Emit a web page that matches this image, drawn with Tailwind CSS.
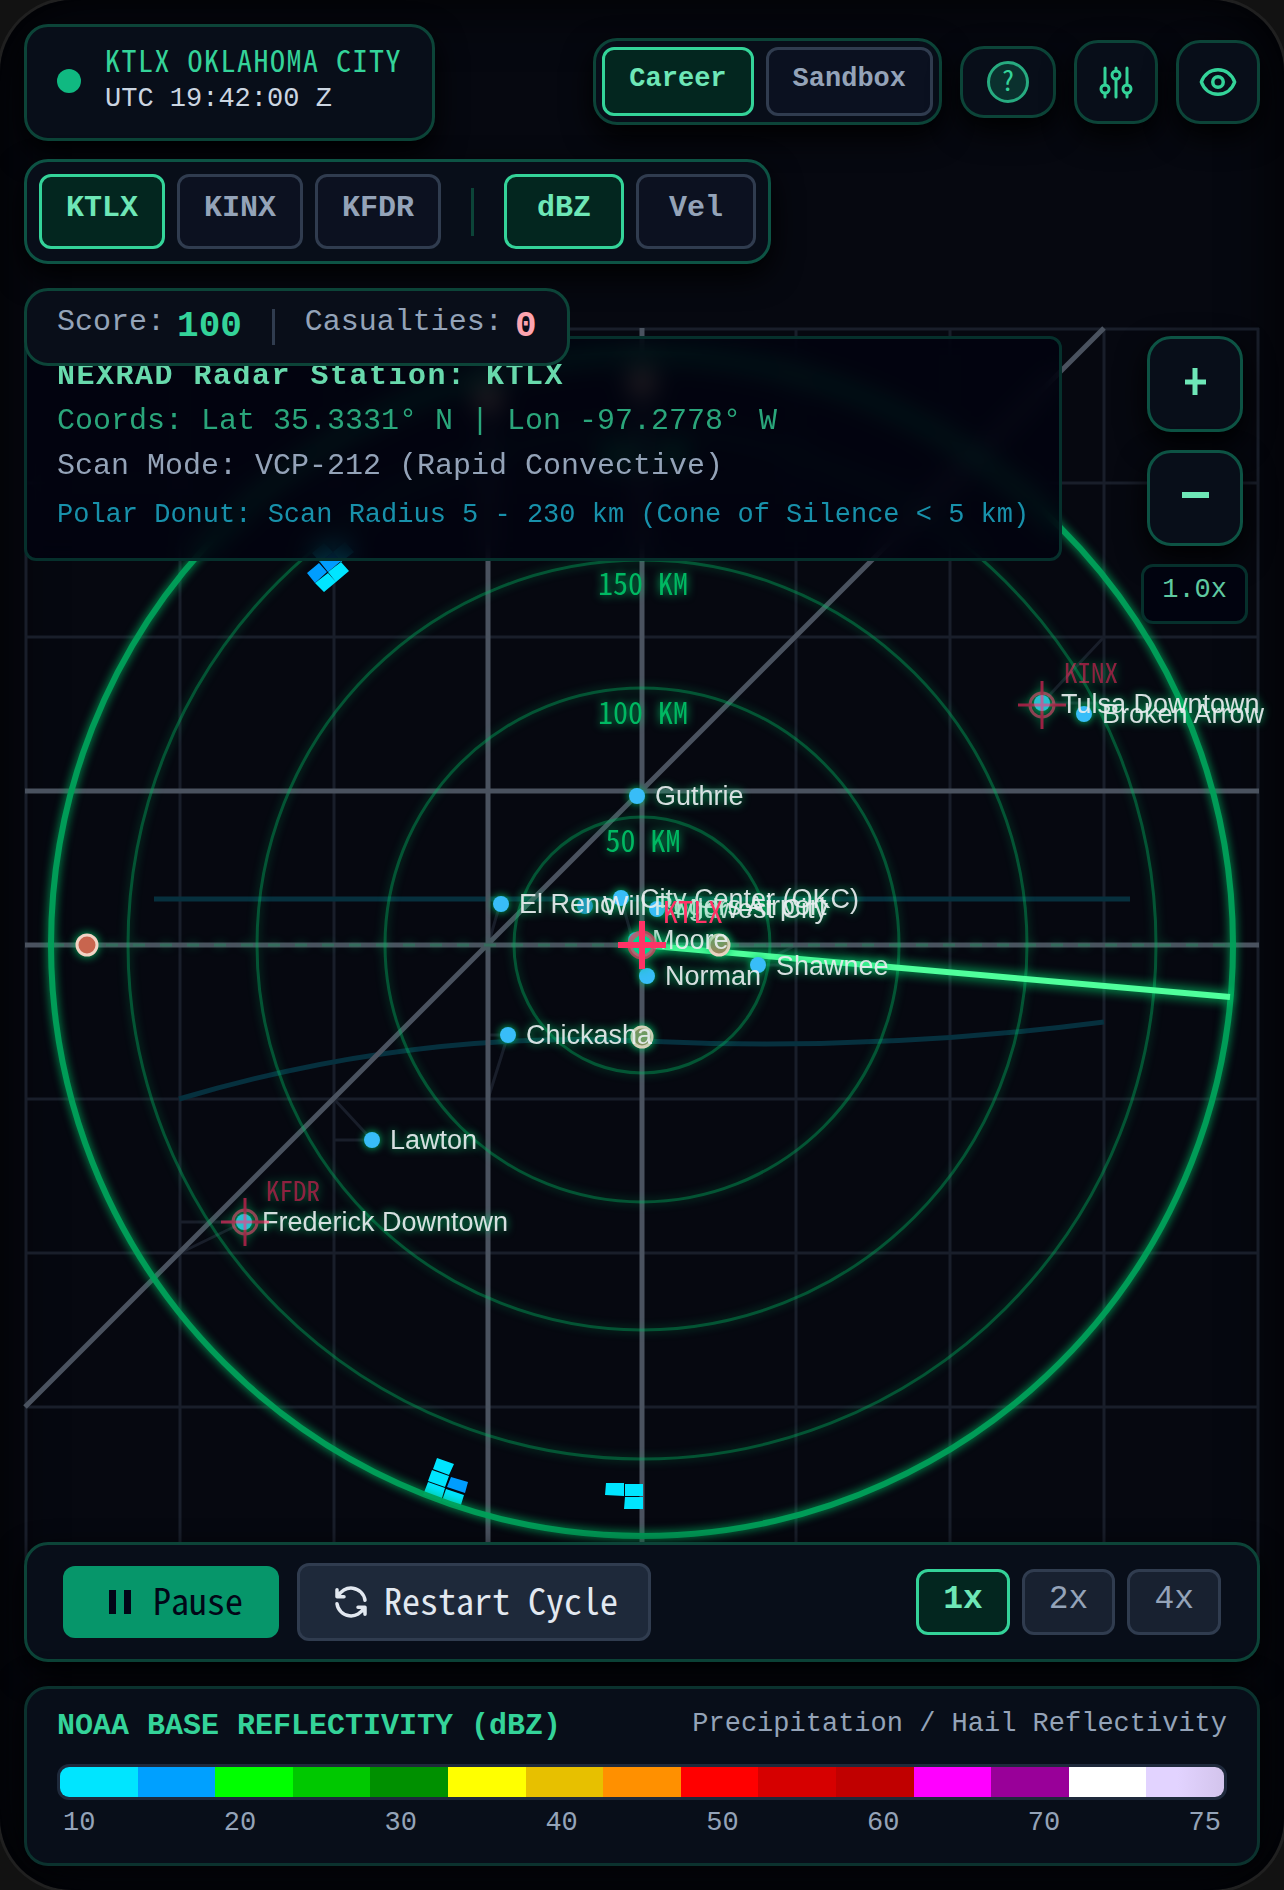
<!DOCTYPE html>
<html lang="en">
<head>
<meta charset="utf-8">
<meta name="viewport" content="width=device-width, initial-scale=1">
<title>NEXRAD Radar Console</title>
<script src="https://cdn.jsdelivr.net/npm/@tailwindcss/browser@4"></script>
</head>
<body class="bg-[#121212] font-['Liberation_Mono',monospace]">
<div class="grid min-h-screen grid-cols-1 overflow-hidden rounded-[72px] bg-[#060810] shadow-[0_0_0_3px_#202020,inset_0_0_60px_#000]">

  <!-- Radar map -->
  <svg class="col-start-1 row-start-1 w-full self-center overflow-visible px-[25px]" viewBox="25 328 1234 1234" fill="none" role="img" aria-label="Radar map">
    <g stroke="#191e2a" stroke-width="3">
      <path d="M26 328V1562M180 328V1562M334 328V1562M796 328V1562M950 328V1562M1104 328V1562M1258 328V1562"/>
      <path d="M25 329H1259M25 483H1259M25 637H1259M25 1099H1259M25 1253H1259M25 1407H1259M25 1561H1259"/>
    </g>
    <g stroke="#191e2a" stroke-width="3">
      <path d="M1104 637L1042 703H1104M334 1099L372 1140H334M180 1253L244 1222H180M488 1099L508 1035H488M488 945L500 904M634 945L621 898M796 945L757 965H796"/>
    </g>
    <g stroke="#06303e" stroke-width="5">
      <path d="M154 899H1130"/>
      <path d="M179 1099Q411 1030 642 1041T1104 1022"/>
    </g>
    <g stroke="#4a525f" stroke-width="5">
      <path d="M488 328V1562M642 328V1562M25 791H1259M25 945H1259M25 1407L1104 328"/>
    </g>
    <!-- Echoes -->
    <g fill="#00e5ff">
      <path d="M333 552L345 542L354 552L341 562ZM312 553L324 543L333 552L320 562Z"/>
      <path d="M328 572L341 562L349 571L336 582ZM315 583L328 573L336 582L324 592Z"/>
      <path d="M437 1458L454 1464L449 1475L433 1469ZM432 1470L449 1476L445 1487L428 1481ZM428 1482L445 1488L441 1501L423 1495ZM446 1489L464 1495L460 1508L442 1501Z"/>
      <path d="M606 1483H624V1496L605 1495ZM625 1484H643V1496H625ZM625 1497H643V1509H624Z"/>
      <g fill="#009dff">
        <path d="M307 573L319 563L327 572L315 583ZM320 562L333 552L341 561L328 572ZM451 1477L468 1482L465 1493L447 1487Z"/>
      </g>
    </g>
    <!-- Range rings -->
    <g class="[filter:drop-shadow(0_0_5px_#00b862)]">
      <g stroke="#00b060" stroke-opacity=".4" stroke-width="3">
        <circle cx="642" cy="945" r="128"/><circle cx="642" cy="945" r="257"/><circle cx="642" cy="945" r="385"/><circle cx="642" cy="945" r="514"/>
      </g>
      <path d="M52 945H1232" stroke="#1d8a5c" stroke-opacity=".4" stroke-width="3" stroke-dasharray="12 15"/>
      <circle cx="642" cy="945" r="591" stroke="#00a05a" stroke-opacity=".95" stroke-width="6"/>
      <g class="font-['Noto_Sans_Mono_CJK_SC','Noto_Sans_Mono_CJK_JP',monospace]" fill="#00b862" font-size="30" text-anchor="middle">
        <text x="642" y="467">200 KM</text><text x="643" y="595">150 KM</text><text x="643" y="724">100 KM</text><text x="643" y="852">50 KM</text>
      </g>
    </g>
    <path class="[filter:drop-shadow(0_0_6px_#00ff80)]" d="M642 945L1230 997" stroke="#50ff9c" stroke-width="6"/>
    <!-- Storm reports -->
    <g class="[filter:drop-shadow(0_0_5px_#00c86a)]" stroke="#f3d3c5" stroke-width="3">
      <circle cx="87" cy="945" r="10" fill="#c8654e"/><circle cx="719" cy="945" r="10" fill="#a4855f"/><circle cx="642" cy="1037" r="10" fill="#a4855f"/><circle cx="642" cy="382" r="10" fill="#c8654e"/><circle cx="488" cy="398" r="10" fill="#c8654e"/>
    </g>
    <!-- Cities -->
    <g class="font-['Liberation_Sans',sans-serif] [filter:drop-shadow(0_0_4px_#00c86a)]" font-size="27" fill="#38bdf8">
      <circle cx="585" cy="906" r="8" fill="#1f9cb8"/><circle cx="621" cy="898" r="8"/><circle cx="636" cy="940" r="8"/>
      <circle cx="637" cy="796" r="8"/><circle cx="501" cy="904" r="8"/><circle cx="657" cy="909" r="8"/>
      <circle cx="647" cy="976" r="8"/><circle cx="758" cy="965" r="8"/><circle cx="508" cy="1035" r="8"/>
      <circle cx="372" cy="1140" r="8"/><circle cx="244" cy="1222" r="8"/><circle cx="1042" cy="703" r="8"/><circle cx="1084" cy="714" r="8"/>
      <g fill="#e8eef0" fill-opacity=".92">
        <text x="640" y="908">City Center (OKC)</text><text x="603" y="915">Will Rogers Airport</text><text x="675" y="918">Midwest City</text><text x="652" y="949">Moore</text>
        <text x="655" y="805">Guthrie</text><text x="519" y="913">El Reno</text><text x="665" y="985">Norman</text><text x="776" y="975">Shawnee</text>
        <text x="526" y="1044">Chickasha</text><text x="390" y="1149">Lawton</text><text x="262" y="1231">Frederick Downtown</text><text x="1061" y="713">Tulsa Downtown</text><text x="1102" y="723">Broken Arrow</text>
      </g>
    </g>
    <!-- Stations -->
    <g class="font-['Noto_Sans_Mono_CJK_SC','Noto_Sans_Mono_CJK_JP',monospace]" stroke="#ff3366">
      <g class="[filter:drop-shadow(0_0_6px_#00c86a)]">
        <circle cx="642" cy="945" r="12" stroke-width="5" stroke-opacity=".65" fill="#00d68f"/>
        <path d="M618 945H666M642 921V969" stroke-width="6"/>
        <text x="663" y="923" font-size="30" fill="#ff3366" stroke="none">KTLX</text>
      </g>
      <g class="[filter:drop-shadow(0_0_5px_#00c86a)]" opacity=".6">
        <circle cx="245" cy="1222" r="12" stroke-width="3" stroke="#e8617c"/><path d="M221 1222H269M245 1198V1246" stroke-width="3"/>
        <circle cx="1042" cy="705" r="12" stroke-width="3" stroke="#e8617c"/><path d="M1018 705H1066M1042 681V729" stroke-width="3"/>
        <g font-size="27" fill="#ff3366" fill-opacity=".9" stroke="none"><text x="266" y="1201">KFDR</text><text x="1064" y="683">KINX</text></g>
      </g>
    </g>
  </svg>

  <!-- Interface -->
  <div class="col-start-1 row-start-1 flex flex-col p-6">
    <header class="mb-[18px] flex items-center justify-between">
      <div class="flex h-[117px] items-center gap-6 rounded-3xl border-3 border-[#0c4438] bg-[#080e19] px-[30px] pb-[3px] shadow-[0_12px_30px_#000]">
        <span class="size-6 rounded-full bg-[#10b981]"></span>
        <div>
          <h1 class="font-['Noto_Sans_Mono_CJK_SC','Noto_Sans_Mono_CJK_JP',monospace] text-[30px] leading-[36px] tracking-wider text-[#34d399]">KTLX OKLAHOMA CITY</h1>
          <p class="text-[27px] leading-[44px] text-[#cbd5e1]">UTC 19:42:00 Z</p>
        </div>
      </div>
      <div class="flex items-center gap-[18px] pb-[2px]">
        <div class="flex gap-3 rounded-3xl border-3 border-[#0c4438] bg-[#080e19] p-[6px] shadow-[0_12px_30px_#000]">
          <button class="h-[69px] rounded-xl border-3 border-[#34d399] bg-[#03261f] px-6 pb-1 text-[27px] font-bold text-[#6ee7b7]">Career</button>
          <button class="h-[69px] rounded-xl border-3 border-[#303c4f] bg-[#0b1120] px-6 pb-1 text-[27px] font-bold text-[#94a3b8]">Sandbox</button>
        </div>
        <button aria-label="Help" class="grid h-[72px] w-[96px] place-items-center rounded-3xl border-3 border-[#0c4438] bg-[#080e19] shadow-[0_12px_30px_#000]"><span class="grid size-[42px] place-items-center rounded-full border-3 border-[#27ab80] bg-[#0a312e] pb-1 font-['Noto_Sans_Mono_CJK_SC','Noto_Sans_Mono_CJK_JP',monospace] text-[27px] leading-none text-[#34d399]">?</span></button>
        <button aria-label="Settings" class="grid size-[84px] place-items-center rounded-3xl border-3 border-[#0c4438] bg-[#080e19] shadow-[0_12px_30px_#000]">
          <svg class="size-[42px]" viewBox="0 0 42 42" fill="none" stroke="#34d399" stroke-width="3" stroke-linecap="round"><path d="M10 7V24M10 33V36M21 7V10M21 19V36M32 7V24M32 33V36"/><circle cx="10" cy="28" r="4"/><circle cx="21" cy="14" r="4"/><circle cx="32" cy="28" r="4"/></svg>
        </button>
        <button aria-label="Layers" class="grid size-[84px] place-items-center rounded-3xl border-3 border-[#0c4438] bg-[#080e19] shadow-[0_12px_30px_#000]">
          <svg class="size-[42px]" viewBox="0 0 24 24" fill="none" stroke="#34d399" stroke-width="2" stroke-linejoin="round"><path d="M2.500 12C4 7.700 7.500 5 12 5S20 7.700 21.500 12C20 16.300 16.500 19 12 19S4 16.300 2.500 12Z"/><circle cx="12" cy="12" r="3"/></svg>
        </button>
      </div>
    </header>

    <nav class="mb-6 flex items-center gap-3 self-start rounded-3xl border-3 border-[#0d5344] bg-[#080e19] p-3 shadow-[0_12px_30px_#000]">
      <button class="h-[75px] rounded-xl border-3 border-[#34d399] bg-[#03261f] px-6 pb-[6px] text-[30px] font-bold text-[#6ee7b7]">KTLX</button>
      <button class="h-[75px] rounded-xl border-3 border-[#303c4f] bg-[#0c1120] px-6 pb-[6px] text-[30px] font-bold text-[#94a3b8]">KINX</button>
      <button class="h-[75px] rounded-xl border-3 border-[#303c4f] bg-[#0c1120] px-6 pb-[6px] text-[30px] font-bold text-[#94a3b8]">KFDR</button>
      <span class="mx-[18px] h-12 w-[3px] bg-[#0c4438]"></span>
      <button class="h-[75px] rounded-xl border-3 border-[#34d399] bg-[#03261f] px-[30px] pb-[6px] text-[30px] font-bold text-[#6ee7b7]">dBZ</button>
      <button class="h-[75px] rounded-xl border-3 border-[#303c4f] bg-[#0c1120] px-[30px] pb-[6px] text-[30px] font-bold text-[#94a3b8]">Vel</button>
    </nav>

    <section class="z-10 flex h-[78px] items-center gap-[30px] self-start rounded-3xl border-3 border-[#0c4438] bg-[#090e19] px-[30px] text-[30px] text-[#94a3b8]">
      <p class="flex items-center gap-3"><span class="pb-[10px]">Score:</span><b class="text-4xl text-[#34d399]">100</b></p>
      <span class="h-9 w-[3px] bg-[#303c4f]"></span>
      <p class="flex items-center gap-3"><span class="pb-[10px]">Casualties:</span><b class="text-4xl text-[#fda4af]">0</b></p>
    </section>

    <div class="-mt-[30px] flex items-start justify-between">
      <section class="h-[225px] rounded-xl border-3 border-[#06302c] bg-[#01030f]/80 px-[30px] pt-[15px] text-[30px] leading-[45px] backdrop-blur-md">
        <h2 class="font-bold tracking-wider text-[#68d9ac]">NEXRAD Radar Station: KTLX</h2>
        <p class="text-[#2aa67b]">Coords: Lat 35.3331° N | Lon -97.2778° W</p>
        <p class="text-[#94a3b8]">Scan Mode: VCP-212 (Rapid Convective)</p>
        <p class="pt-1 text-[27px] text-[#1891ab]">Polar Donut: Scan Radius 5 - 230 km (Cone of Silence &lt; 5 km)</p>
      </section>
      <div class="flex flex-col items-center gap-[18px] pr-3">
        <button aria-label="Zoom in" class="grid size-24 place-items-center rounded-3xl border-3 border-[#0d5344] bg-[#080e19] text-[#6ee7b7] shadow-[0_12px_30px_#000]">
          <svg class="size-12" viewBox="0 0 48 48" fill="none" stroke="currentColor" stroke-width="5"><path d="M14 22H35M24 8V35"/></svg>
        </button>
        <button aria-label="Zoom out" class="grid size-24 place-items-center rounded-3xl border-3 border-[#0d5344] bg-[#080e19] text-[#6ee7b7] shadow-[0_12px_30px_#000]">
          <svg class="size-12" viewBox="0 0 48 48" fill="none" stroke="currentColor" stroke-width="6"><path d="M11 21H38"/></svg>
        </button>
        <output class="h-[60px] rounded-xl border-3 border-[#06302c] bg-[#01030f] px-[18px] pt-[3px] text-[27px] leading-[40px] text-[#5fc9a0]">1.0x</output>
      </div>
    </div>

    <section class="mt-auto mb-6 flex h-[120px] items-center justify-between rounded-3xl border-3 border-[#0c4438] bg-[#080e19] px-9 shadow-[0_12px_30px_#000]">
      <div class="flex items-center gap-[18px] font-['Noto_Sans_Mono_CJK_SC','Noto_Sans_Mono_CJK_JP',monospace] text-4xl">
        <button class="flex h-[72px] items-center gap-3 rounded-xl bg-[#06966a] px-9 leading-none text-[#020617]">
          <svg class="size-[42px]" viewBox="0 0 42 42" fill="currentColor"><path d="M10 9H17V33H10ZM25 9H32V33H25Z"/></svg><span class="pb-[6px]">Pause</span></button>
        <button class="flex h-[78px] items-center gap-3 rounded-xl border-3 border-[#303c4f] bg-[#1e293a] px-[30px] leading-none text-[#e2e8f0]">
          <svg class="size-[42px]" viewBox="0 0 24 24" fill="none" stroke="currentColor" stroke-width="2" stroke-linecap="round" stroke-linejoin="round"><path d="M20 11A8.100 8.100 0 0 0 4.500 9M4 5V9H8M4 13A8.100 8.100 0 0 0 19.500 15M20 19V15H16"/></svg><span class="pb-[6px]">Restart Cycle</span></button>
      </div>
      <div class="flex gap-3 text-[33px] text-[#94a3b8]">
        <button class="h-[66px] rounded-xl border-3 border-[#34d399] bg-[#03261f] px-6 pb-1 font-bold text-[#6ee7b7]">1x</button>
        <button class="h-[66px] rounded-xl border-3 border-[#303c4f] bg-[#182130] px-6 pb-1">2x</button>
        <button class="h-[66px] rounded-xl border-3 border-[#303c4f] bg-[#182130] px-6 pb-1">4x</button>
      </div>
    </section>

    <section class="flex h-[180px] flex-col rounded-3xl border-3 border-[#0b322e] bg-[#080e19] px-[30px] pt-[15px] shadow-[0_0_30px_#000]">
      <div class="flex items-start justify-between leading-[45px]">
        <h2 class="text-[30px] font-bold text-[#34d399]">NOAA BASE REFLECTIVITY (dBZ)</h2>
        <p class="-mt-[2px] text-[27px] text-[#94a3b8]">Precipitation / Hail Reflectivity</p>
      </div>
      <div class="mt-[15px] flex h-9 overflow-hidden rounded-xl border-3 border-[#1e293b]">
        <i class="flex-1 bg-[#00e5ff]"></i><i class="flex-1 bg-[#00a0ff]"></i><i class="flex-1 bg-[#00ff00]"></i><i class="flex-1 bg-[#00c800]"></i><i class="flex-1 bg-[#009000]"></i>
        <i class="flex-1 bg-[#ffff00]"></i><i class="flex-1 bg-[#e7c000]"></i><i class="flex-1 bg-[#ff9000]"></i><i class="flex-1 bg-[#ff0000]"></i><i class="flex-1 bg-[#d60000]"></i>
        <i class="flex-1 bg-[#c00000]"></i><i class="flex-1 bg-[#ff00ff]"></i><i class="flex-1 bg-[#990099]"></i><i class="flex-1 bg-white"></i><i class="flex-1 bg-linear-to-r from-[#e2d3ff] from-40% to-[#d3c4ec]"></i>
      </div>
      <div class="flex justify-between px-[6px] pt-[3px] text-[27px] leading-[40px] text-[#94a3b8]"><span>10</span><span>20</span><span>30</span><span>40</span><span>50</span><span>60</span><span>70</span><span>75</span></div>
    </section>
  </div>
</div>
</body>
</html>
